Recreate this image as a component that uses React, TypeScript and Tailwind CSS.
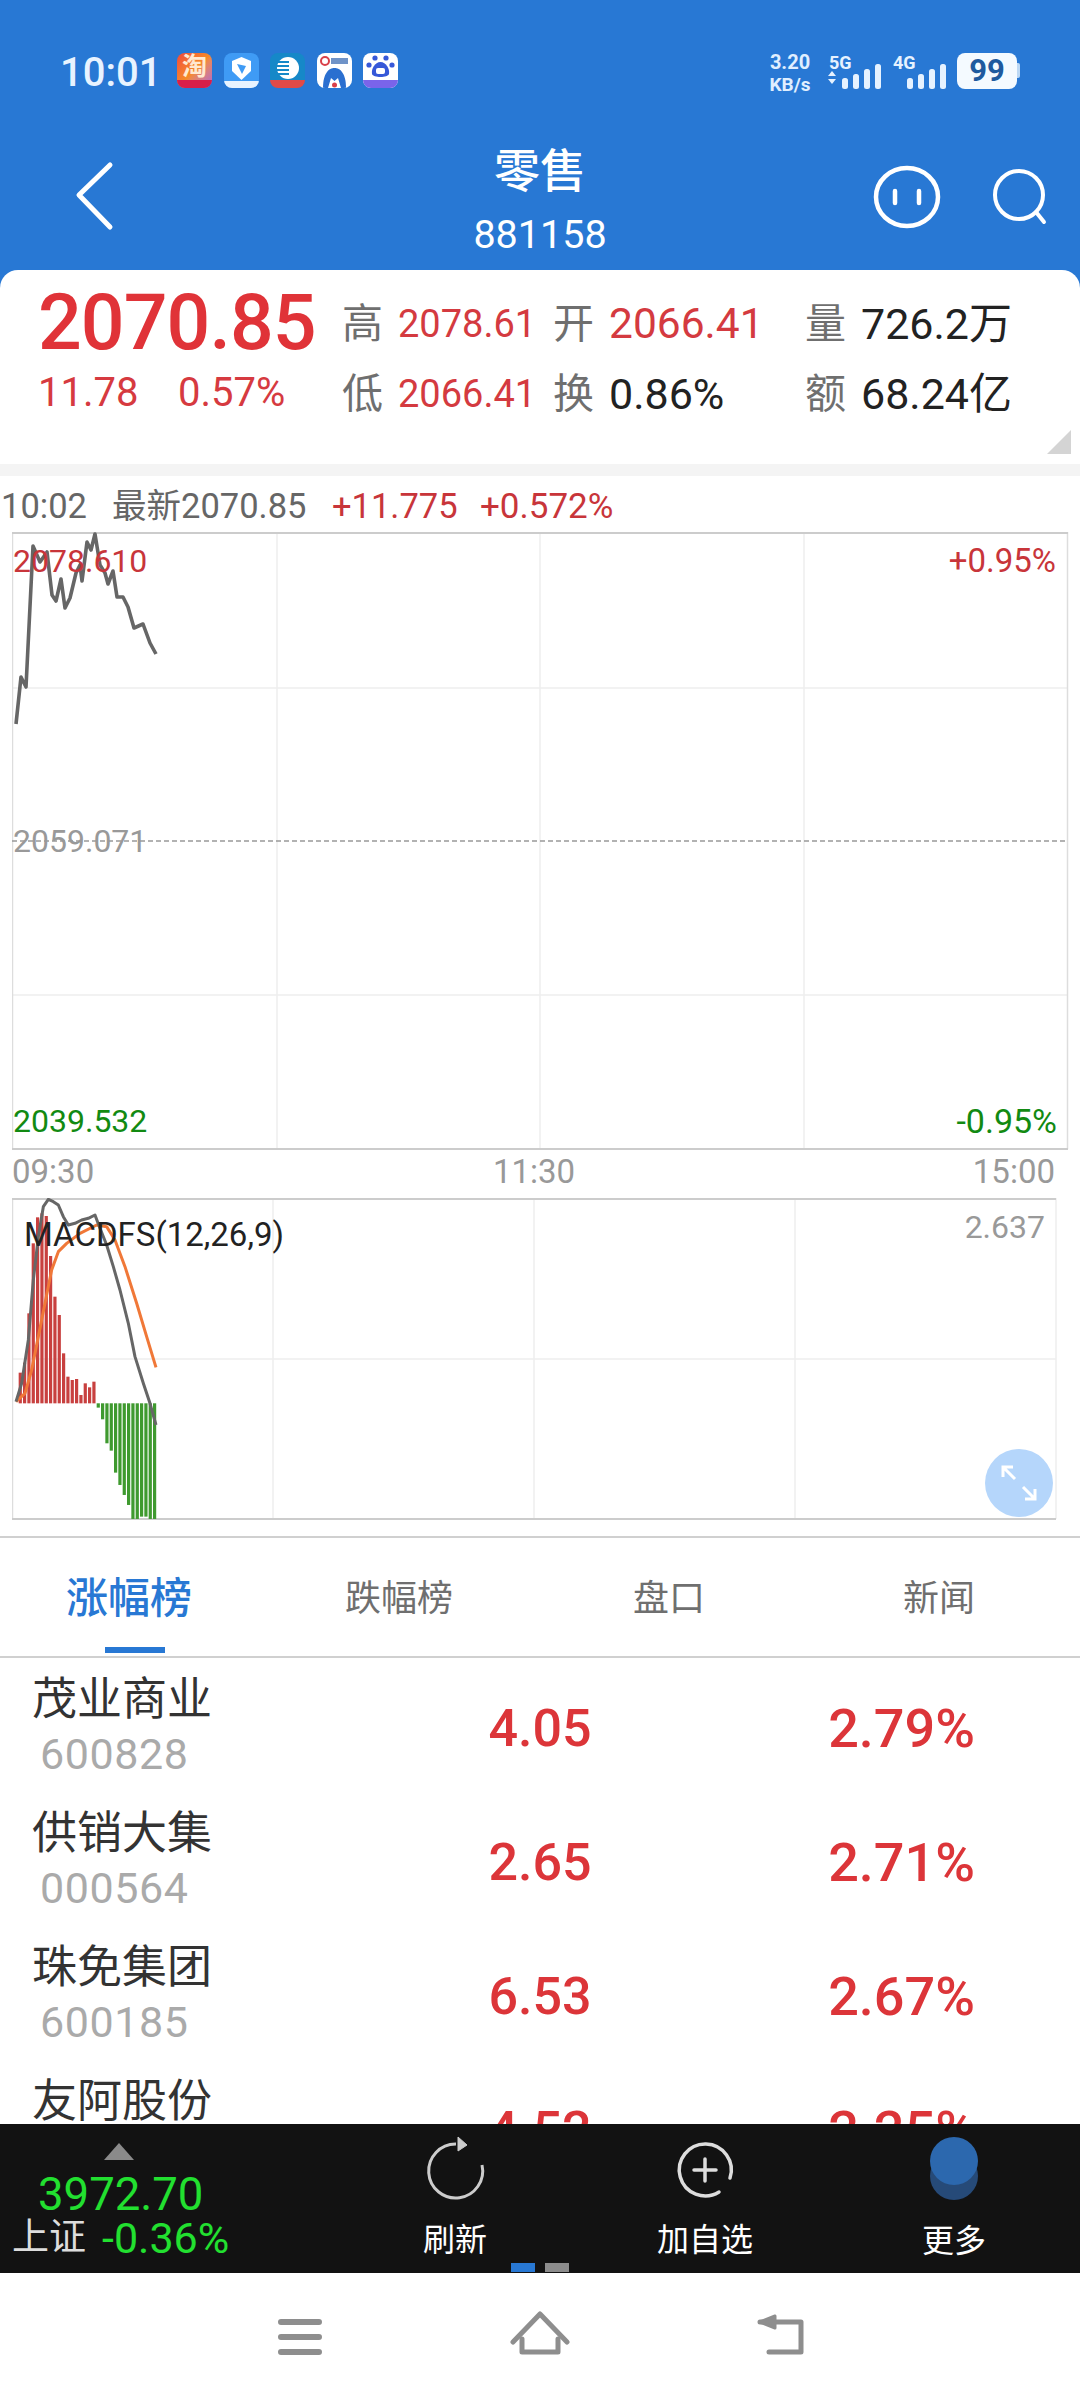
const redBars = [578, 548, 400, 190, 112, 100, 108, 228, 350, 405, 520, 590, 600, 597, 645, 610, 622, 605];
const greenBars = [683, 718, 790, 812, 878, 915, 945, 975, 1017, 1017, 1010, 1010, 1017, 1017];

const pricePath =
  '16,724 21,677 26,687 33,546 40,562 47,552 52,595 56,601 61,579 65,608 70,598 76,573 80,565 82,581 87,542 91,550 95,534 100,565 105,573 108,584 113,571 117,597 123,597 128,607 134,628 143,624 150,643 156,654';

const difPath =
  '48,665 65,610 85,480 100,300 115,170 130,80 145,58 160,65 175,75 190,110 205,135 225,130 245,120 265,115 285,105 300,145 320,195 340,260 360,330 385,430 405,530 430,610 450,670 468,735';

const deaPath =
  '48,665 75,640 95,570 115,470 135,370 155,270 175,215 200,190 240,160 290,135 320,140 345,180 375,260 410,370 440,470 468,562';

// last row is cut by the bottom bar, its code never shows
const stocks = [
  { name: '茂业商业', code: '600828', price: '4.05', pct: '2.79%' },
  { name: '供销大集', code: '000564', price: '2.65', pct: '2.71%' },
  { name: '珠免集团', code: '600185', price: '6.53', pct: '2.67%' },
  { name: '友阿股份', code: '\u00a0', price: '4.52', pct: '2.25%' },
];

function AppIcons() {
  return (
    <div className="ml-[17px] flex gap-[11.5px] pt-[5px]">
      <div className="relative h-[35px] w-[35px] overflow-hidden rounded-[8px] bg-gradient-to-br from-[#f0463a] via-[#f58a28] to-[#b060d0]">
        <span className="absolute inset-x-0 top-0 text-center text-[25px] leading-[27px] font-bold text-[#ffe9d0]">淘</span>
        <div className="absolute inset-x-0 bottom-0 h-[8px] bg-[#d81e4a]" />
      </div>
      <div className="relative h-[35px] w-[35px] overflow-hidden rounded-[8px] bg-[#3f9bf5]">
        <svg viewBox="0 0 35 35" className="h-[35px] w-[35px]">
          <path d="M17.5 4 L27 8 V18 L17.5 27 L8 18 V8 Z" fill="#fff" />
          <path d="M13 11 L22 13 L18 21 Z" fill="#3f9bf5" />
          <rect x="0" y="28" width="35" height="7" fill="#e8f3ff" />
        </svg>
      </div>
      <div className="relative h-[35px] w-[35px] overflow-hidden rounded-[8px] bg-[#1688c8]">
        <svg viewBox="0 0 35 35" className="h-[35px] w-[35px]">
          <circle cx="18" cy="15" r="11" fill="#fff" />
          <rect x="6" y="8" width="13" height="2" fill="#1688c8" />
          <rect x="6" y="12" width="13" height="2" fill="#1688c8" />
          <rect x="6" y="16" width="13" height="2" fill="#1688c8" />
          <rect x="6" y="20" width="13" height="2" fill="#1688c8" />
          <rect x="0" y="27" width="35" height="8" fill="#e04a48" />
        </svg>
      </div>
      <div className="relative h-[35px] w-[35px] overflow-hidden rounded-[8px] bg-white">
        <svg viewBox="0 0 35 35" className="h-[35px] w-[35px]">
          <circle cx="8" cy="8" r="4" fill="none" stroke="#d8404a" strokeWidth="2" />
          <rect x="14" y="5" width="17" height="6" fill="#6f93c8" />
          <path d="M6 35 C6 20 12 15 17.5 15 C23 15 29 20 29 35 Z" fill="#2a6fd0" />
          <path d="M11 35 L14 25 L17.5 28 L21 25 L24 35 Z" fill="#fff" />
          <circle cx="17.5" cy="32" r="2.5" fill="#d8404a" />
        </svg>
      </div>
      <div className="relative h-[35px] w-[35px] overflow-hidden rounded-[8px] bg-white">
        <svg viewBox="0 0 35 35" className="h-[35px] w-[35px]">
          <circle cx="12" cy="5" r="2.6" fill="#3658d8" />
          <circle cx="23" cy="5" r="2.6" fill="#3658d8" />
          <circle cx="6" cy="12" r="2.6" fill="#3658d8" />
          <circle cx="29" cy="12" r="2.6" fill="#3658d8" />
          <path d="M17.5 9 C23 9 27 16 26 21 C25 25 10 25 9 21 C8 16 12 9 17.5 9 Z" fill="#3658d8" />
          <rect x="13" y="15" width="9" height="6" rx="2" fill="#fff" />
          <rect x="0" y="27" width="35" height="8" fill="#7a64ea" />
        </svg>
      </div>
    </div>
  );
}

function SignalBars({ arrows }: { arrows?: boolean }) {
  return (
    <svg width="53" height="26" viewBox="0 0 53 26" className="block">
      {arrows ? (
        <g fill="#e6f2ff">
          <path d="M0 12 L4 7 L8 12 Z" />
          <path d="M0 15 L8 15 L4 20 Z" />
        </g>
      ) : null}
      <rect x="14" y="14" width="6" height="11" rx="2.5" fill="#e6f2ff" />
      <rect x="25" y="10" width="6" height="15" rx="2.5" fill="#e6f2ff" />
      <rect x="36" y="5" width="6" height="20" rx="2.5" fill="#e6f2ff" />
      <rect x="47" y="0" width="6" height="25" rx="2.5" fill="#e6f2ff" />
    </svg>
  );
}

function StatusBar() {
  return (
    <div className="flex h-[124px] items-start pt-[48px] pl-[60px] text-white">
      <span className="w-[100px] pt-[3px] text-[40px] leading-[44px] font-medium text-[#e8f3ff]">10:01</span>
      <AppIcons />
      <div className="ml-auto flex items-start pt-[5px]">
        <div className="flex w-[48px] flex-col items-center text-[#e0efff]">
          <span className="text-[20px] leading-[18px] font-bold">3.20</span>
          <span className="mt-[5px] text-[19px] leading-[18px] font-bold">KB/s</span>
        </div>
        <div className="relative ml-[14px] h-[36px] w-[53px]">
          <span className="absolute top-[1px] left-[1px] text-[18px] leading-[17px] font-bold text-[#e6f2ff]">5G</span>
          <div className="absolute top-[11px] left-0">
            <SignalBars arrows />
          </div>
        </div>
        <div className="relative ml-[12px] h-[36px] w-[53px]">
          <span className="absolute top-[1px] left-0 text-[18px] leading-[17px] font-bold text-[#e6f2ff]">4G</span>
          <div className="absolute top-[11px] left-0">
            <SignalBars />
          </div>
        </div>
        <div className="ml-[11px] flex h-[36px] w-[60px] items-center justify-center rounded-[8px] bg-[#f4faff] text-[31px] font-bold text-[#1f5a9e]">
          99
        </div>
        <div className="mt-[10px] mr-[60px] h-[15px] w-[3px] rounded-r-[2px] bg-[#bcd8f4]" />
      </div>
    </div>
  );
}

function TitleBar() {
  return (
    <div className="relative flex h-[146px] flex-col items-center text-white">
      <span className="mt-[21px] text-[46px] leading-[52px] font-medium">零售</span>
      <span className="mt-[16px] text-[39.5px] leading-[44px]">881158</span>
      <svg width="44" height="72" viewBox="0 0 44 72" fill="none" stroke="#fff" strokeWidth="5" strokeLinecap="round" strokeLinejoin="round" className="absolute top-[36px] left-[73px]">
        <path d="M37 5 L6 35 L37 67" />
      </svg>
      <svg width="180" height="72" viewBox="0 0 180 72" className="absolute top-[41px] right-[28px]" fill="none" stroke="#fff">
        <ellipse cx="35" cy="32" rx="31" ry="29" strokeWidth="4.5" />
        <path d="M23 26 V38 M47 26 V38" strokeWidth="4.5" strokeLinecap="round" />
        <circle cx="147" cy="30" r="24" strokeWidth="4" />
        <path d="M164 47 L172 57" strokeWidth="4" strokeLinecap="round" />
      </svg>
    </div>
  );
}

function Stat({ label, value, red, valueClass }: { label: string; value: string; red?: boolean; valueClass: string }) {
  return (
    <div className="flex h-[70px] items-center">
      <span className="w-[56px] text-[41px] leading-none text-[#6f6f6f]">{label}</span>
      <span className={`${valueClass} leading-none ${red ? 'text-[#d43a40]' : 'text-[#222]'}`}>{value}</span>
    </div>
  );
}

function QuoteCard() {
  return (
    <div className="bg-[#2878d4]">
      <div className="relative flex h-[194px] items-start rounded-t-[18px] bg-white pt-[19px]">
        <div className="w-[342px] pl-[38px] text-[#e03338]">
          <div className="mt-[-1px] text-[77px] leading-[70px] font-medium tracking-[-0.9px]">2070.85</div>
          <div className="flex text-[40px] leading-[70px] text-[#d63a40]">
            <span className="w-[140px]">11.78</span>
            <span>0.57%</span>
          </div>
        </div>
        <div className="grid flex-1 grid-cols-[211px_252px_1fr] content-start">
          <Stat label="高" value="2078.61" red valueClass="text-[38px]" />
          <Stat label="开" value="2066.41" red valueClass="text-[42.5px]" />
          <Stat label="量" value="726.2万" valueClass="text-[43px]" />
          <Stat label="低" value="2066.41" red valueClass="text-[38px]" />
          <Stat label="换" value="0.86%" valueClass="text-[43px]" />
          <Stat label="额" value="68.24亿" valueClass="text-[43px]" />
        </div>
        <div className="absolute right-[9px] bottom-[10px] h-0 w-0 border-b-[24px] border-l-[24px] border-b-[#d4d4d4] border-l-transparent" />
      </div>
    </div>
  );
}

function PriceChart() {
  return (
    <div className="relative ml-[12px] h-[618px] w-[1057px]">
      <svg viewBox="12 532 1057 618" width="1057" height="618" className="block" fill="none">
        <path d="M277 532 V1149 M540 532 V1149 M804 532 V1149 M12 688 H1068 M12 995 H1068" stroke="#eeeeee" strokeWidth="1.5" />
        <path d="M12.5 532 V1149" stroke="#dddddd" strokeWidth="1.5" />
        <path d="M1067.5 532 V1149" stroke="#dddddd" strokeWidth="1.5" />
        <path d="M12 533 H1068 M12 1149 H1068" stroke="#cccccc" strokeWidth="2" />
        <path d="M12 841 H1066" stroke="#999999" strokeWidth="1.5" strokeDasharray="5 3" />
        <polyline points={pricePath} stroke="#666666" strokeWidth="3.6" strokeLinejoin="round" />
      </svg>
      <span className="absolute top-[14px] left-[1px] text-[32px] leading-[30px] text-[#c8353a]">2078.610</span>
      <span className="absolute top-[14px] right-[13px] text-[33px] leading-[30px] text-[#c8353a]">+0.95%</span>
      <span className="absolute top-[294px] left-[1px] text-[32px] leading-[30px] text-[#999]">2059.071</span>
      <span className="absolute top-[574px] left-[1px] text-[32px] leading-[30px] text-[#128a12]">2039.532</span>
      <span className="absolute top-[574px] right-[12px] text-[34px] leading-[30px] text-[#128a12]">-0.95%</span>
    </div>
  );
}

function MacdChart() {
  return (
    <div className="relative ml-[12px] h-[323px] w-[1045px]">
      <svg viewBox="12 1198 1045 323" width="1045" height="323" className="block" fill="none">
        <path d="M273 1198 V1519 M534 1198 V1519 M795 1198 V1519 M1056 1198 V1519 M12 1359 H1056" stroke="#eeeeee" strokeWidth="1.5" />
        <path d="M12.5 1198 V1519" stroke="#dddddd" strokeWidth="1.5" />
        <path d="M12 1199 H1056 M12 1519 H1056" stroke="#cccccc" strokeWidth="2" />
        {redBars.map((top, i) => (
          <rect key={i} x={(56 + i * 13) / 3} y={1180 + top / 3} width="3.2" height={(670 - top) / 3} fill="#c8403f" />
        ))}
        {greenBars.map((bottom, i) => (
          <rect key={i} x={(290 + i * 13) / 3} y="1403.3" width="3.2" height={(bottom - 670) / 3} fill="#3f9a2f" />
        ))}
        <g transform="translate(0 1180) scale(0.3333)" strokeWidth="9" strokeLinejoin="round">
          <polyline points={deaPath} stroke="#f07838" />
          <polyline points={difPath} stroke="#666666" />
        </g>
      </svg>
      <span className="absolute top-[19px] left-[12px] text-[33px] leading-[36px] text-[#222]">MACDFS(12,26,9)</span>
      <span className="absolute top-[11px] right-[12px] text-[32px] leading-[36px] text-[#999]">2.637</span>
      <div className="absolute top-[251px] left-[973px] flex h-[68px] w-[68px] items-center justify-center rounded-full bg-[#b5d6fb]">
        <svg width="38" height="38" viewBox="0 0 38 38" fill="none" stroke="#fff" strokeWidth="3">
          <path d="M3 13 V3 H13 M3 3 L15 15 M35 25 V35 H25 M35 35 L23 23" />
        </svg>
      </div>
    </div>
  );
}

function Tabs() {
  return (
    <div className="mt-[15px] h-[122px] border-y-2 border-[#d0d0d0]">
      <div className="-ml-[6px] grid h-full grid-cols-[repeat(4,270px)] pt-[3px]">
        <div className="relative flex items-center justify-center text-[42px] font-medium text-[#2878d4]">
          涨幅榜
          <div className="absolute bottom-[3px] left-[111px] h-[6px] w-[60px] bg-[#2878d4]" />
        </div>
        <div className="flex items-center justify-center text-[36px] text-[#6f6f6f]">跌幅榜</div>
        <div className="flex items-center justify-center text-[36px] text-[#6f6f6f]">盘口</div>
        <div className="flex items-center justify-center text-[36px] text-[#6f6f6f]">新闻</div>
      </div>
    </div>
  );
}

function StockList() {
  return (
    <div className="min-h-0 flex-1 overflow-hidden pt-[2px]">
      {stocks.map((s) => (
        <div key={s.name} className="flex h-[134px] items-center">
          <div className="w-[448px] pl-[32px]">
            <div className="text-[45px] leading-[54px] text-[#333]">{s.name}</div>
            <div className="pl-[8px] text-[43px] leading-[54px] tracking-[0.6px] text-[#aaa]">{s.code}</div>
          </div>
          <div className="w-[184px] pt-[4px] text-center text-[52px] leading-none font-medium text-[#dc3539]">{s.price}</div>
          <div className="w-[343px] pt-[4px] text-right text-[54px] leading-none font-medium text-[#dc3539]">{s.pct}</div>
        </div>
      ))}
    </div>
  );
}

function BottomBar() {
  return (
    <div className="relative flex h-[149px] bg-[#121212]">
      <div className="flex w-[240px] flex-col">
        <div className="mt-[19px] ml-[104px] h-0 w-0 border-x-[15px] border-b-[17px] border-x-transparent border-b-[#8a8a8a]" />
        <div className="mt-[10px] ml-[38px] text-[45.5px] leading-[50px] text-[#22e030]">3972.70</div>
        <div className="mt-[-5px] flex items-center pl-[12px] text-[37px] leading-[46px]">
          <span className="text-[#dddddd]">上证</span>
          <span className="ml-[16px] text-[43px] text-[#22e030]">-0.36%</span>
        </div>
      </div>
      <div className="absolute top-0 left-[380px] flex w-[150px] flex-col items-center">
        <svg width="70" height="70" viewBox="0 0 70 70" fill="none" className="mt-[12px]" stroke="#cccccc">
          <path d="M62 29 A27 27 0 1 1 36 8" strokeWidth="3" />
          <path d="M38 1 L47 9 L38 15 Z" fill="#cccccc" strokeWidth="1" />
        </svg>
        <span className="mt-[15px] text-[32px] leading-[38px] text-white">刷新</span>
      </div>
      <div className="absolute top-0 left-[630px] flex w-[150px] flex-col items-center">
        <svg width="70" height="70" viewBox="0 0 70 70" fill="none" className="mt-[11px]" stroke="#dddddd">
          <path d="M60 43 A26 26 0 1 0 49 57" strokeWidth="3.5" strokeLinecap="round" />
          <path d="M35 24 V46 M24 35 H46" strokeWidth="3.5" strokeLinecap="round" />
        </svg>
        <span className="mt-[16px] text-[32px] leading-[38px] text-white">加自选</span>
      </div>
      <div className="absolute top-0 left-[879px] flex w-[150px] flex-col items-center">
        <svg width="48" height="63" viewBox="0 0 48 63" className="mt-[13px]">
          <circle cx="24" cy="39" r="24" fill="#264a78" />
          <circle cx="24" cy="24" r="24" fill="#2c68ae" />
        </svg>
        <span className="mt-[22px] text-[32px] leading-[38px] text-white">更多</span>
      </div>
      <div className="absolute bottom-[1px] left-[511px] flex gap-[10px]">
        <div className="h-[9px] w-[24px] bg-[#2878d4]" />
        <div className="h-[9px] w-[24px] bg-[#8c8c8c]" />
      </div>
    </div>
  );
}

function NavBar() {
  return (
    <div className="flex h-[127px] bg-white pt-[38px]">
      <svg viewBox="0 38 1080 50" width="1080" height="50" fill="none" stroke="#8e8e8e" strokeWidth="6" strokeLinecap="round" strokeLinejoin="round" className="block">
        <path d="M281 49 H319 M281 64 H319 M281 79 H319" />
        <path d="M513 69 L540 41 L567 69" strokeWidth="5" />
        <path d="M522 66 V79 H558 V66" strokeWidth="5" />
        <path d="M760 49 H801 V79 H769" strokeWidth="5" />
        <path d="M760 49 L775 43 L775 55 Z" strokeWidth="3" fill="#8e8e8e" />
      </svg>
    </div>
  );
}

export default function App() {
  return (
    <div className="flex h-[2400px] w-[1080px] flex-col overflow-hidden bg-white font-['Roboto','Noto_Sans_CJK_SC',sans-serif]">
      <div className="bg-[#2878d4]">
        <StatusBar />
        <TitleBar />
      </div>
      <QuoteCard />
      <div className="h-[12px] bg-[#f4f4f4]" />
      <div className="flex h-[56px] items-center pt-[5px] pl-[1px] text-[34.5px] leading-none whitespace-nowrap">
        <span className="w-[111px] text-[#666]">10:02</span>
        <span className="w-[220px] text-[#666]">最新2070.85</span>
        <span className="w-[148px] text-[#c8353a]">+11.775</span>
        <span className="text-[35px] text-[#c8353a]">+0.572%</span>
      </div>
      <PriceChart />
      <div className="relative h-[48px] text-[33px] leading-[44px] text-[#999]">
        <div className="flex justify-between pr-[25px] pl-[12px]">
          <span>09:30</span>
          <span className="pl-[1px]">11:30</span>
          <span>15:00</span>
        </div>
      </div>
      <MacdChart />
      <Tabs />
      <StockList />
      <BottomBar />
      <NavBar />
    </div>
  );
}
